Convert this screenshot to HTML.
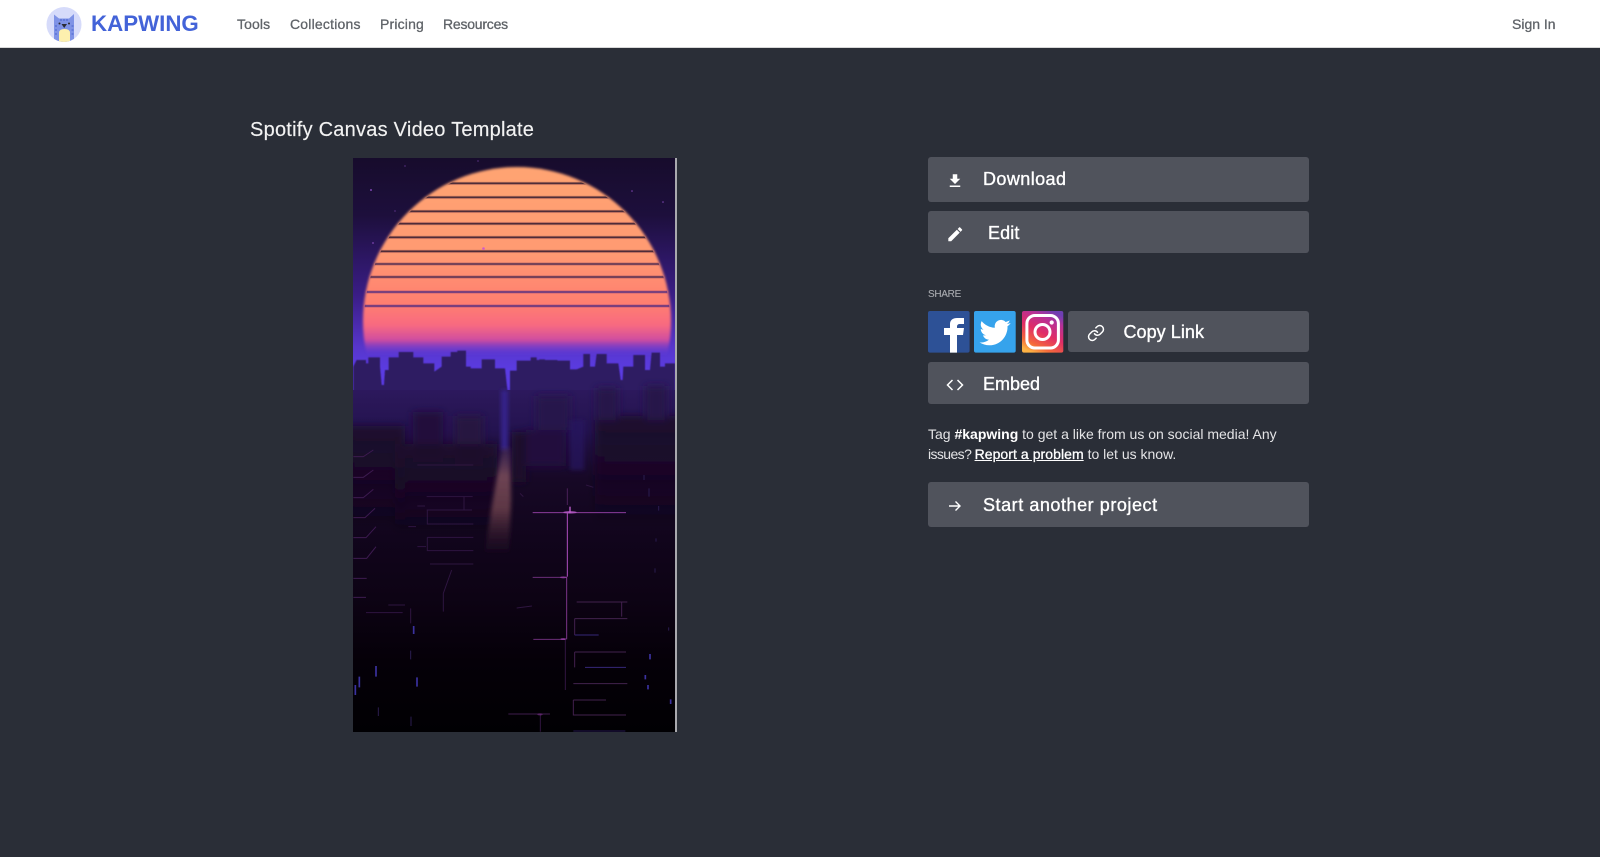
<!DOCTYPE html>
<html lang="en">
<head>
<meta charset="utf-8">
<title>Spotify Canvas Video Template - Kapwing</title>
<style>
html,body{margin:0;padding:0;width:1600px;height:857px;overflow:hidden;background:#2a2e37;font-family:"Liberation Sans",sans-serif;}
.t{position:absolute;white-space:nowrap;line-height:20px;}
.hd{position:absolute;left:0;top:0;width:1600px;height:47px;background:#fff;border-bottom:1px solid #d8d8d8;}
.nav{color:#5f6368;font-size:14px;top:14px;-webkit-text-stroke:.3px #5f6368;}
.btn{position:absolute;background:#50535c;border-radius:3px;}
.bt{color:#fff;font-size:18px;-webkit-text-stroke:.35px #fff;}
svg{position:absolute;display:block;}
a{color:inherit;}
</style>
</head>
<body>
<div class="hd"></div>
<svg style="left:46px;top:6px" width="36" height="36" viewBox="0 0 36 36">
  <defs><clipPath id="cc"><circle cx="18" cy="18.500" r="17.500"/></clipPath></defs>
  <circle cx="18" cy="18.500" r="17.500" fill="#d6dbfa"/>
  <g clip-path="url(#cc)">
    <path d="M8 8.500 L13 12.500 H23 L28 8 V36 H8Z" fill="#7f93e6"/>
    <path d="M13 36 V27 Q13 23 18.500 23 Q24 23 24 27 V36Z" fill="#fdf0ae"/>
    <path d="M15.500 18 H21 L18.200 22Z" fill="#2b2b33"/>
    <circle cx="13.500" cy="17.500" r="1" fill="#2b2b33"/><circle cx="23" cy="17.500" r="1" fill="#2b2b33"/>
    <path d="M9 20h2M9 24h2M9 28h2M25.500 20h2M25.500 24h2M25.500 28h2M15 13v2M18 13v2M21 13v2" stroke="#4a63cf" stroke-width="1"/>
  </g>
</svg>
<div class="t" style="left:91px;top:14px;font-size:22.300px;font-weight:700;color:#4363d8;">KAPWING</div>
<div class="t nav" style="left:237px;letter-spacing:.1px;">Tools</div>
<div class="t nav" style="left:290px;letter-spacing:.2px;">Collections</div>
<div class="t nav" style="left:380px;letter-spacing:.17px;">Pricing</div>
<div class="t nav" style="left:443px;letter-spacing:-.22px;">Resources</div>
<div class="t nav" style="left:1512px;">Sign In</div>

<div class="t" style="left:250px;top:119.500px;font-size:20px;color:#f2f2f2;letter-spacing:.24px;-webkit-text-stroke:.15px #f2f2f2;">Spotify Canvas Video Template</div>

<!-- video -->
<svg style="left:353px;top:158px" width="324" height="574" viewBox="353 158 324 574">
  <defs>
    <linearGradient id="bg" gradientUnits="userSpaceOnUse" x1="0" y1="158" x2="0" y2="732">
      <stop offset="0" stop-color="#170c2c"/>
      <stop offset=".1" stop-color="#1d0f3c"/>
      <stop offset=".24" stop-color="#3a1d86"/>
      <stop offset=".33" stop-color="#5736cc"/>
      <stop offset=".37" stop-color="#5b3ce2"/>
      <stop offset="1" stop-color="#5b3ce2"/>
    </linearGradient>
    <linearGradient id="city" gradientUnits="userSpaceOnUse" x1="0" y1="380" x2="0" y2="732">
      <stop offset="0" stop-color="#2e1a62"/>
      <stop offset=".06" stop-color="#2a1758"/>
      <stop offset=".14" stop-color="#241350"/>
      <stop offset=".2" stop-color="#1f0e3c"/>
      <stop offset=".28" stop-color="#170826"/>
      <stop offset=".45" stop-color="#11051c"/>
      <stop offset=".62" stop-color="#0d0314"/>
      <stop offset=".8" stop-color="#050008"/>
      <stop offset="1" stop-color="#010003"/>
    </linearGradient>
    <linearGradient id="sun" gradientUnits="userSpaceOnUse" x1="0" y1="167" x2="0" y2="355">
      <stop offset="0" stop-color="#ffa472"/>
      <stop offset=".45" stop-color="#ff9a72"/>
      <stop offset=".72" stop-color="#ff7f70"/>
      <stop offset=".84" stop-color="#f86a80"/>
      <stop offset=".92" stop-color="#cf4da0"/>
      <stop offset="1" stop-color="#6a3cdc" stop-opacity="0"/>
    </linearGradient>
    <linearGradient id="road" gradientUnits="userSpaceOnUse" x1="0" y1="448" x2="0" y2="560">
      <stop offset="0" stop-color="#5a3a68" stop-opacity=".4"/>
      <stop offset=".25" stop-color="#6e4454"/>
      <stop offset=".55" stop-color="#5c3644"/>
      <stop offset="1" stop-color="#2a1028" stop-opacity="0"/>
    </linearGradient>
    <linearGradient id="dk" x1="0" y1="0" x2="0" y2="1">
      <stop offset="0" stop-color="#1c0a2c"/>
      <stop offset=".5" stop-color="#180824" stop-opacity=".7"/>
      <stop offset="1" stop-color="#12051c" stop-opacity="0"/>
    </linearGradient>
    <filter id="b1" x="-10%" y="-10%" width="120%" height="120%"><feGaussianBlur stdDeviation="1.200"/></filter>
    <filter id="b2" x="-30%" y="-30%" width="160%" height="160%"><feGaussianBlur stdDeviation="2"/></filter>
    <filter id="b4" x="-30%" y="-30%" width="160%" height="160%"><feGaussianBlur stdDeviation="4"/></filter>
    <filter id="b05" x="-5%" y="-5%" width="110%" height="110%"><feGaussianBlur stdDeviation=".45"/></filter>
    <clipPath id="sc"><circle cx="517" cy="321" r="153"/></clipPath>
    <clipPath id="vc"><rect x="353" y="158" width="322" height="574"/></clipPath>
  </defs>
  <g clip-path="url(#vc)">
  <rect x="353" y="158" width="322" height="574" fill="url(#bg)"/>
  <g fill="#7c45b0">
    <circle cx="371" cy="190" r="1"/><circle cx="405" cy="166" r=".6"/><circle cx="478" cy="161" r=".6"/>
    <circle cx="632" cy="191" r=".8"/><circle cx="663" cy="202" r=".8"/><circle cx="395" cy="211" r=".6"/><circle cx="373" cy="243" r=".9"/>
  </g>
  <!-- sun -->
  <g filter="url(#b1)">
    <circle cx="517" cy="321" r="154" fill="url(#sun)"/>
  </g>
  <g clip-path="url(#sc)" filter="url(#b05)" stroke-width="1.600">
    <path d="M350 183.300H680M350 197.300H680M350 211.300H680M350 223.700H680M350 237.300H680M350 251.300H680" stroke="#22082c"/>
    <path d="M350 264H680M350 277H680" stroke="#261048"/>
    <path d="M350 292H680M350 306H680" stroke="#2e1a84"/>
  </g>
  <circle cx="483.500" cy="248.500" r="1.300" fill="#d25ac8"/>
  <!-- skyline + city -->
  <g filter="url(#b05)">
  <path transform="translate(340 150) scale(.33333)" fill="#2e1a62" d="M40 900V650L50 630H78V640H85V622H120V650L125 705H132L135 660H146V622H176V606H220V622H250V640H283V665L305 650V620H332V606H352V602H378V650H392V655H425V628H465V655H495L503 730H510V662H530V632H572V622H590V630H598V628H615V630H652V632H690V658H710L730 650V612H750V650H765L770 612H800V640H835L842 690H848L850 650H880V615H915V660H930L935 608H960V650H975V640H1005V900Z"/>
  </g>
  <rect x="353" y="390" width="322" height="342" fill="url(#city)"/>
  <!-- dark buildings -->
  <g filter="url(#b4)">
    <rect x="345" y="426" width="60" height="100" fill="url(#dk)"/>
    <rect x="413" y="412" width="30" height="50" fill="#22103a"/>
    <rect x="455" y="416" width="28" height="50" fill="#251340"/>
    <rect x="395" y="444" width="102" height="90" fill="url(#dk)"/>
    <rect x="512" y="432" width="14" height="50" fill="#1a0a2a"/>
    <rect x="526" y="430" width="40" height="36" fill="#20103c"/>
    <rect x="595" y="416" width="90" height="110" fill="url(#dk)"/>
    <rect x="596" y="388" width="22" height="32" fill="#26144a"/>
    <rect x="645" y="386" width="22" height="34" fill="#26144a"/>
    <rect x="536" y="396" width="34" height="34" fill="#26144c"/>
  </g>
  <rect x="501" y="390" width="7" height="60" fill="#36208a" filter="url(#b2)"/>
  <rect x="570" y="420" width="14" height="50" fill="#271660" filter="url(#b2)" opacity=".7"/>
  <path d="M502 448H510L511 500L509 552H485L492 505Z" fill="url(#road)" filter="url(#b2)"/>
  <!-- lines -->
  <g transform="translate(340 390) scale(.33333)" fill="none" filter="url(#b05)">
    <g stroke="#3c1a50" stroke-width="3">
      <path d="M40 200H70L100 180M40 262H70L100 240M40 323H70L100 298M40 383H75L105 355M40 443H78L108 410M40 505H80L108 470M40 565H80M40 622H78"/>
    </g>
    <g stroke="#2e1440" stroke-width="3">
      <path d="M232 225H400M260 320H398M372 320V360M260 360H396M262 360V402H400M262 442H400M262 442V482H400M270 522H400M232 470H258M205 410H228M232 348H255"/>
      <path d="M335 540L310 610V665M78 668H188M212 655V700M145 645H195"/>
      <path d="M530 654L576 648M540 310L550 320M738 285L760 292"/>
    </g>
    <g stroke-width="3">
      <path d="M578 368H858" stroke="#8a3a9a"/>
      <path d="M682 370V560" stroke="#b050c0"/>
      <path d="M682 295V345" stroke="#4a2058"/>
      <path d="M578 562H680" stroke="#6a2e78"/>
      <path d="M580 748H676" stroke="#6a2e78"/>
      <path d="M680 560V748" stroke="#7a3488"/>
      <path d="M676 748V900" stroke="#321640"/>
      <path d="M505 972H630" stroke="#3e1a4c"/>
      <path d="M601 972V1025" stroke="#321640"/>
    </g>
    <ellipse cx="690" cy="367" rx="20" ry="4" fill="#c060d0" opacity=".7"/>
    <path d="M690 350V368" stroke="#c060d0" stroke-width="4"/>
    <ellipse cx="670" cy="562" rx="10" ry="3" fill="#a848b8" opacity=".6"/>
    <ellipse cx="670" cy="747" rx="9" ry="3" fill="#a848b8" opacity=".6"/>
    <ellipse cx="600" cy="973" rx="8" ry="3" fill="#8a3a9a" opacity=".5"/>
    <g stroke="#42204e" stroke-width="3">
      <path d="M710 636H862M845 636V680M704 686H862M704 686V735M704 786V832M704 786H858M700 881H862M700 930V975H858M700 930H798"/>
      <path d="M704 735H776M735 832H858" stroke="#342678"/>
    </g>
    <g stroke="#3a30a0" stroke-width="5">
      <path d="M108 828V860M58 860V892M46 885V915M231 862V890M221 708V732M930 792V808M916 855V868M924 885V898M992 928V942"/>
    </g>
    <g stroke="#2a1c50" stroke-width="3">
      <path d="M115 952V978M212 782V808M213 980V1008M912 255V270M927 295V320M956 348V362M948 445V455M945 535V548M986 712V722"/>
    </g>
    <path d="M700 1023H856" stroke="#241650" stroke-width="3"/>
  </g>
  </g>
  <rect x="675" y="158" width="2" height="574" fill="#a9a9ae"/>
</svg>

<!-- Buttons -->
<div class="btn" style="left:927.700px;top:157px;width:381.600px;height:45px;"></div>
<svg style="left:946px;top:171.500px" width="18" height="18" viewBox="0 0 24 24"><path fill="#fff" d="M19 9h-4V3H9v6H5l7 7 7-7zM5 18v2h14v-2H5z"/></svg>
<div class="t bt" style="left:983px;top:169px;letter-spacing:.42px;">Download</div>

<div class="btn" style="left:927.700px;top:211px;width:381.600px;height:42px;"></div>
<svg style="left:945.800px;top:224.800px" width="18.500" height="18.500" viewBox="0 0 24 24"><path fill="#fff" d="M3 17.250V21h3.750L17.810 9.940l-3.750-3.750L3 17.250zM20.710 7.040c.39-.39.39-1.020 0-1.410l-2.340-2.340c-.39-.39-1.020-.39-1.410 0l-1.830 1.830 3.750 3.750 1.830-1.830z"/></svg>
<div class="t bt" style="left:988px;top:223px;letter-spacing:.1px;">Edit</div>

<div class="t" style="left:928px;top:285px;font-size:10px;color:#a9abb0;letter-spacing:-.3px;-webkit-text-stroke:.1px #a9abb0;">SHARE</div>

<svg style="left:927.700px;top:310.700px" width="42" height="42" viewBox="0 0 42 42">
  <rect width="41.600" height="41.600" rx="2" fill="#2d5196"/>
  <path fill="#fff" d="M22 41.600V24H16V17H22V13C22 9 25 7 29 7H36V13H32C30 13 29 14 29 15.500V17H36L35 24H29V41.600Z"/>
</svg>
<svg style="left:974.300px;top:310.700px" width="42" height="42" viewBox="0 0 42 42">
  <rect width="41.700" height="41.600" rx="2" fill="#36a3ec"/>
  <g transform="translate(5.500 6) scale(1.300)"><path fill="#fff" d="M23.953 4.570a10 10 0 01-2.825.775 4.958 4.958 0 002.163-2.723c-.951.555-2.005.959-3.127 1.184a4.920 4.920 0 00-8.384 4.482C7.690 8.095 4.067 6.130 1.640 3.162a4.822 4.822 0 00-.666 2.475c0 1.710.87 3.213 2.188 4.096a4.904 4.904 0 01-2.228-.616v.06a4.923 4.923 0 003.946 4.827 4.996 4.996 0 01-2.212.085 4.936 4.936 0 004.604 3.417 9.867 9.867 0 01-6.102 2.105c-.39 0-.779-.023-1.170-.067a13.995 13.995 0 007.557 2.209c9.053 0 13.998-7.496 13.998-13.985 0-.21 0-.42-.015-.63A9.935 9.935 0 0024 4.590z"/></g>
</svg>
<svg style="left:1021.700px;top:310.700px" width="42" height="42" viewBox="0 0 42 42">
  <defs>
    <linearGradient id="ig" x1=".25" y1="1" x2=".75" y2="0">
      <stop offset="0" stop-color="#fdb244"/>
      <stop offset=".18" stop-color="#f4693a"/>
      <stop offset=".48" stop-color="#e12d66"/>
      <stop offset=".8" stop-color="#b53198"/>
      <stop offset="1" stop-color="#6d3fb2"/>
    </linearGradient>
  </defs>
  <rect width="41.300" height="41.600" rx="2" fill="url(#ig)"/>
  <rect x="4.900" y="4.500" width="31.500" height="32.500" rx="8" fill="none" stroke="#fff" stroke-width="3"/>
  <circle cx="20.500" cy="21" r="7.500" fill="none" stroke="#fff" stroke-width="3"/>
  <circle cx="29.700" cy="11.500" r="2.100" fill="#fff"/>
</svg>
<div class="btn" style="left:1068px;top:310.700px;width:241.300px;height:41.600px;"></div>
<svg style="left:1087px;top:324px" width="18" height="18" viewBox="0 0 24 24" fill="none" stroke="#fff" stroke-width="2" stroke-linecap="round" stroke-linejoin="round"><path d="M10 13a5 5 0 0 0 7.540.54l3-3a5 5 0 0 0-7.070-7.070l-1.720 1.710"/><path d="M14 11a5 5 0 0 0-7.540-.54l-3 3a5 5 0 0 0 7.070 7.070l1.710-1.710"/></svg>
<div class="t bt" style="left:1123.500px;top:322px;letter-spacing:.05px;">Copy Link</div>

<div class="btn" style="left:927.700px;top:362px;width:381.600px;height:42px;"></div>
<svg style="left:946px;top:376px" width="18" height="18" viewBox="0 0 18 18" fill="none" stroke="#fff" stroke-width="1.500"><path d="M6.500 4L1.500 9l5 5M11.500 4l5 5-5 5"/></svg>
<div class="t bt" style="left:983px;top:374px;">Embed</div>

<div class="t" style="left:928px;top:423.500px;font-size:14px;color:#e4e4e6;">Tag <b style="color:#fff">#kapwing</b> to get a like from us on social media! Any</div>
<div class="t" style="left:928px;top:443.500px;font-size:14px;color:#e4e4e6;"><span style="letter-spacing:-.6px;">issues? </span><a href="#" style="color:#fff;-webkit-text-stroke:.3px #fff;letter-spacing:.06px;">Report a problem</a> to let us know.</div>

<div class="btn" style="left:927.700px;top:482px;width:381.600px;height:45px;"></div>
<svg style="left:947px;top:498px" width="16" height="16" viewBox="0 0 16 16" fill="none" stroke="#fff" stroke-width="1.400"><path d="M2 8h11M8.500 3.500L13 8l-4.500 4.500"/></svg>
<div class="t bt" style="left:983px;top:495px;letter-spacing:.55px;">Start another project</div>
</body>
</html>
